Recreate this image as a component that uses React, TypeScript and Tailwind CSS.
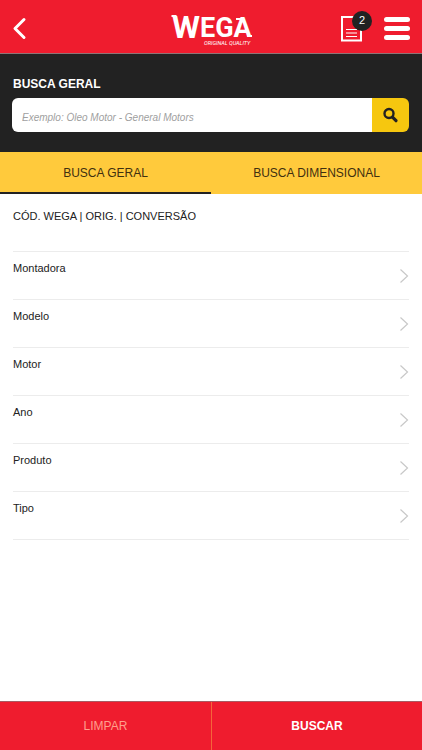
import React from 'react';

const filters = ['Montadora', 'Modelo', 'Motor', 'Ano', 'Produto', 'Tipo'];

const Logo: React.FC = () => (
  <svg viewBox="0 0 84 46" className="w-[84px] h-[46px] overflow-visible" role="img" aria-label="Wega Original Quality">
    <text x="3" y="34" fontSize="32" fontWeight="700" fill="#fff" fontFamily="Roboto, 'Liberation Sans', sans-serif">
      W<tspan y="33" fontSize="27">EGA</tspan>
    </text>
    <path d="M2.500 12h5M67 15h5M78 32h5" stroke="#fff" strokeWidth="2" fill="none" />
    <text x="35" y="41" fontSize="5.500" fill="#fff" fontStyle="italic" fontFamily="Roboto, 'Liberation Sans', sans-serif">
      ORIGINAL QUALITY
    </text>
  </svg>
);

const Header: React.FC = () => (
  <header className="grid grid-cols-3 items-center h-[54px] px-3 bg-[#ef1c2e] border-b border-[#8f7476]">
    <button aria-label="Voltar" className="w-4 h-6 mt-1">
      <svg viewBox="0 0 16 24" className="w-4 h-6" fill="none" stroke="#fff" strokeWidth="3" strokeLinecap="round" strokeLinejoin="round">
        <path d="M12 2.500L3 11.500l9 9" />
      </svg>
    </button>
    <div className="flex justify-center">
      <Logo />
    </div>
    <div className="flex justify-end items-center gap-5 pt-1">
      <button aria-label="Lista, 2 itens" className="relative w-6 h-7">
        <svg viewBox="0 0 24 28" className="w-6 h-7" fill="none" stroke="#fff" strokeWidth="2">
          <path d="M14 2H2v23.500h19V10" />
          <path d="M6 14.500h11M6 18h11M6 21.500h11" strokeWidth="1.200" />
        </svg>
        <span className="absolute -top-1 left-3 flex items-center justify-center w-5 h-5 rounded-full bg-[#222] text-white text-[11px]">
          2
        </span>
      </button>
      <button aria-label="Menu" className="flex flex-col gap-1 w-[26px]">
        <span className="h-[5px] w-full rounded-full bg-white" />
        <span className="h-[5px] w-full rounded-full bg-white" />
        <span className="h-[5px] w-full rounded-full bg-white" />
      </button>
    </div>
  </header>
);

const SearchBar: React.FC = () => (
  <form className="bg-[#222] px-3 pt-5 pb-5" onSubmit={(e) => e.preventDefault()}>
    <label htmlFor="busca" className="block px-px text-xs leading-5 font-bold text-white">
      BUSCA GERAL
    </label>
    <div className="flex h-[34px] mt-1 mr-px rounded-md overflow-hidden">
      <input
        id="busca"
        type="text"
        placeholder="Exemplo: Óleo Motor - General Motors"
        className="flex-1 min-w-0 px-[10px] pt-1 bg-white text-[10px] italic text-[#222] placeholder:text-[#a0a0a0] outline-none"
      />
      <button aria-label="Buscar" className="flex items-center justify-center w-[37px] bg-[#f6c70f]">
        <svg viewBox="0 0 16 16" className="w-4 h-4" fill="none" stroke="#222">
          <circle cx="6" cy="6.500" r="4.500" strokeWidth="2.400" />
          <path d="M9.500 10.200l3.500 3.500" strokeWidth="3.200" strokeLinecap="round" />
        </svg>
      </button>
    </div>
  </form>
);

const Tabs: React.FC = () => (
  <nav className="grid grid-cols-2 h-[42px] bg-[#ffca3c] text-xs text-[#3f3010]">
    <button className="pt-0.5 border-b-2 border-[#222]">BUSCA GERAL</button>
    <button className="pt-0.5 border-b-2 border-transparent">BUSCA DIMENSIONAL</button>
  </nav>
);

const FilterRow: React.FC<{ label: string }> = ({ label }) => (
  <li className="border-b border-[#ececec]">
    <button className="flex justify-between w-full h-[47px] text-left">
      <span className="pt-2 leading-4">{label}</span>
      <svg viewBox="0 0 10 16" className="w-[10px] h-4 mt-4" fill="none" stroke="#c8c8c8" strokeWidth="1.200">
        <path d="M1.500 1.500L8.500 8l-7 6.500" />
      </svg>
    </button>
  </li>
);

export default function App() {
  return (
    <div className="flex flex-col min-h-screen bg-white font-['Liberation_Sans',Arial,sans-serif]">
      <Header />
      <SearchBar />
      <Tabs />
      <main className="flex-1 px-[13px] text-[11px] text-[#222]">
        <input
          type="text"
          aria-label="Código Wega, original ou conversão"
          placeholder="CÓD. WEGA | ORIG. | CONVERSÃO"
          className="block w-full h-[58px] pb-[14px] border-b border-[#ececec] placeholder:text-[#222] outline-none"
        />
        <ul>
          {filters.map((label) => (
            <FilterRow key={label} label={label} />
          ))}
        </ul>
      </main>
      <footer className="grid grid-cols-2 h-[49px] bg-[#ef1c2e] border-t border-[#a85a62] text-xs">
        <button className="text-[#ff9f8c]">LIMPAR</button>
        <button className="border-l border-[#f4663a] font-bold text-white">BUSCAR</button>
      </footer>
    </div>
  );
}
